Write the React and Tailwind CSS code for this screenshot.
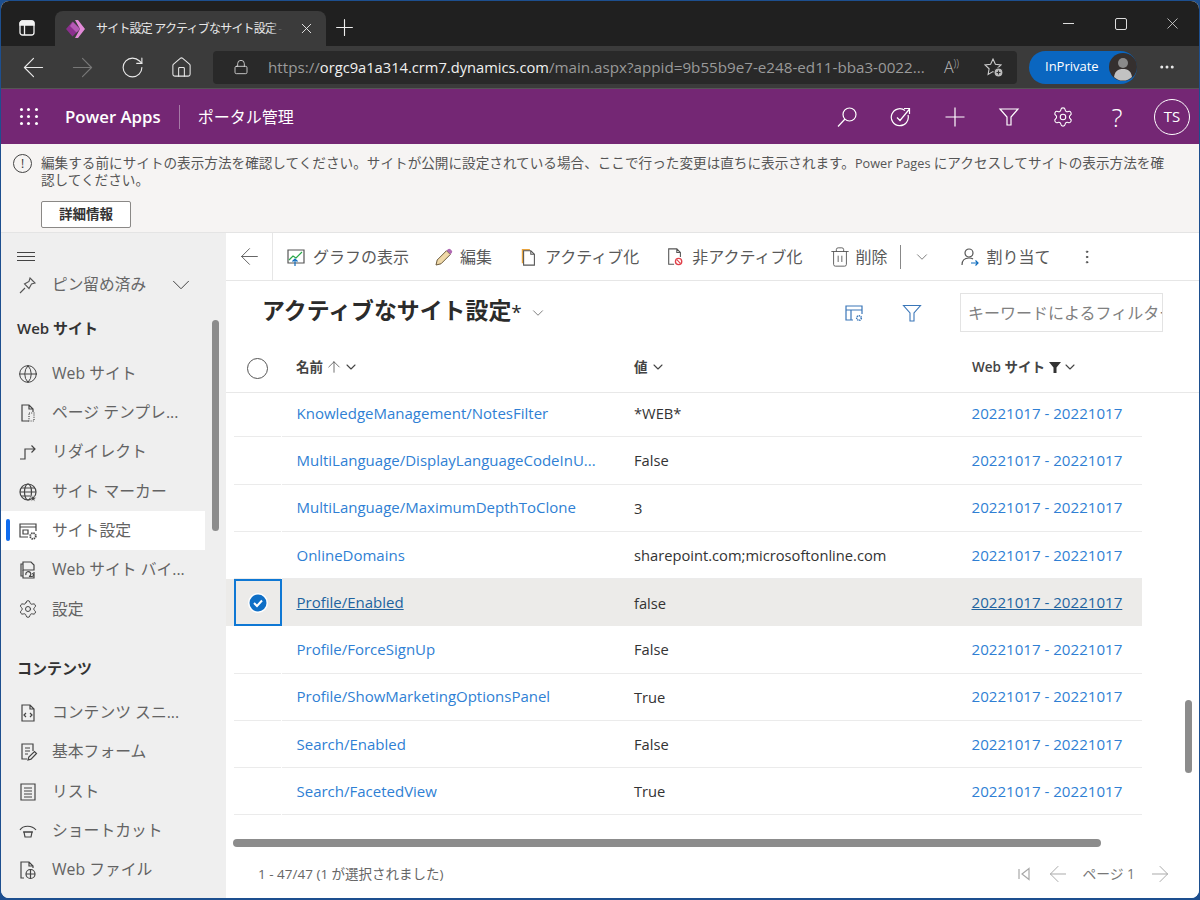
import { Globe, Settings, Plus, ChevronDown, ArrowLeft, ArrowRight, ArrowUp, MoreVertical, MoreHorizontal, X, RotateCw, Home, Lock, Trash2 } from "lucide-react";

const font = "font-['Open_Sans','Noto_Sans_CJK_JP',sans-serif]";

const rows = [
  ["KnowledgeManagement/NotesFilter", "*WEB*"],
  ["MultiLanguage/DisplayLanguageCodeInU...", "False"],
  ["MultiLanguage/MaximumDepthToClone", "3"],
  ["OnlineDomains", "sharepoint.com;microsoftonline.com"],
  ["Profile/Enabled", "false", true],
  ["Profile/ForceSignUp", "False"],
  ["Profile/ShowMarketingOptionsPanel", "True"],
  ["Search/Enabled", "False"],
  ["Search/FacetedView", "True"],
  ["Search/Filters", ""],
];

const Ico = ({ children, size = 20, className = "" }) => (
  <svg width={size} height={size} viewBox="0 0 20 20" fill="none" stroke="currentColor" strokeWidth="1.2" className={"shrink-0 " + className}>
    {children}
  </svg>
);

const siteNav = [
  ["Web サイト", <Globe size={20} strokeWidth={1.2} />],
  ["ページ テンプレ...", <Ico><path d="M11 18H4V2h7l4 4v3M11 2v4h4" /><path d="M11 10h5v8h-5z" strokeDasharray="1 1.2" /></Ico>],
  ["リダイレクト", <Ico><path d="M2 17h5V7h10M13.5 3.5 17 7l-3.5 3.5" /></Ico>],
  ["サイト マーカー", <Ico><circle cx="10" cy="10" r="8" /><ellipse cx="10" cy="10" rx="3.5" ry="8" /><path d="M2 10h16M3 6h14M3 14h9" /><path d="m15 13 1 2.2 2.3.2-1.7 1.5.5 2.3-2.1-1.2-2 1.2.5-2.3-1.7-1.5 2.3-.2z" fill="currentColor" stroke="#efefef" strokeWidth=".6" /></Ico>],
  ["サイト設定", <Ico><path d="M10 16H2V3h16v7M2 6h16" /><path d="M5 9h5v4H5z" /><circle cx="15" cy="15" r="2.8" strokeWidth="1.8" strokeDasharray="1.4 .8" /></Ico>, true],
  ["Web サイト バイ...", <Ico><path d="M5 16H3V4h2M5 2h8l3 3v5H5z" /><path d="M5 10v8h11v-6" /><path d="M8 15a2.5 2.5 0 1 1 3 1.5h3a1.5 1.5 0 0 0 0-3" /></Ico>],
  ["設定", <Settings size={20} strokeWidth={1.2} />],
];

const contentNav = [
  ["コンテンツ スニ...", <Ico><path d="M4 2h8l4 4v12H4zM12 2v4h4" /><path d="m8 10-2 2 2 2M12 10l2 2-2 2" /></Ico>],
  ["基本フォーム", <Ico><path d="M9 17H4V2h11v7M7 6h5M7 9h5M7 12h3" /><path d="m10 18 .8-3L16.5 9.5l2 2-5.5 5.7z" /></Ico>],
  ["リスト", <Ico><path d="M3 2h14v16H3zM6 6h8M6 9h8M6 12h8M6 15h8" /></Ico>],
  ["ショートカット", <Ico><path d="M2 9c3-5 12-5 16 0" /><path d="M6 11h8l-1 5H7z" /><path d="M5 11h10" /></Ico>],
  ["Web ファイル", <Ico><path d="M6 18H3V2h8l4 4v2M11 2v4h4" /><circle cx="12.5" cy="14" r="4.5" /><path d="M8 14h9M12.5 9.5v9" /></Ico>],
];

const NavItem = ({ label, icon, active }) => (
  <div className={"relative mr-[21px] flex h-[39.3px] items-center pl-[17px] text-[15.8px] " + (active ? "bg-white" : "")}>
    {active && <span className="absolute left-[5px] top-[8px] h-[22px] w-[4px] rounded-sm bg-[#0f6cf0]" />}
    <span className="flex w-[20px] justify-center text-[#444]">{icon}</span>
    <span className="ml-[14px] text-[#636363]">{label}</span>
  </div>
);

const Cmd = ({ icon, label, className = "" }) => (
  <div className={"flex items-center text-[16px] text-[#595959] " + className}>
    {icon}
    {label && <span className="ml-[7px]">{label}</span>}
  </div>
);

export default function App() {
  return (
    <div className={"h-[900px] w-[1200px] overflow-hidden bg-[#1d4f8f] p-[1px] pb-[2px] " + font}>
      <div className="flex h-full flex-col overflow-hidden rounded-lg bg-white">
        {/* tab strip */}
        <div className="flex h-[45px] items-end bg-[#202020] pl-[18px] text-white">
          <div className="mb-[10px] mr-[20px]">
            <svg width="16" height="16" viewBox="0 0 16 16" fill="none" stroke="#f3f3f3" strokeWidth="1.3">
              <rect x="1" y="1" width="14" height="14" rx="2.5" />
              <path d="M5.5 5v10" />
              <path d="M1 3.5C1 2 2 1 3.5 1h9C14 1 15 2 15 3.5V5H1z" fill="#f3f3f3" />
            </svg>
          </div>
          <div className="flex h-[35px] w-[271px] items-center rounded-t-lg bg-[#3b3b3b] pl-[11px]">
            <svg width="20" height="20" viewBox="0 0 20 20">
              <path d="M6.5 2.5 14 10l-7.5 7.5L0 10z" fill="#8b2f8d" />
              <path d="M9 1h3l7 9-7 9H9l5-9z" fill="#e28ad8" />
              <path d="m7 3 7 7-3.5 3.5L4 7z" fill="#b55ab5" />
            </svg>
            <span className="relative ml-[10px] w-[187px] overflow-hidden whitespace-nowrap text-[12px] tracking-[-0.8px] text-[#e8e8e8]">
              サイト設定 アクティブなサイト設定 - Power Apps
              <span className="absolute right-0 top-0 h-full w-[14px] bg-gradient-to-r from-transparent to-[#3b3b3b]" />
            </span>
            <X size={17} strokeWidth={1.3} className="ml-[15px] text-[#eee]" />
          </div>
          <Plus size={27} strokeWidth={1} className="mb-[5px] ml-[5px] text-[#eee]" />
          <div className="mb-[13px] ml-auto flex items-center gap-[36px] pr-[17px]">
            <span className="mr-[5px] h-px w-[11px] bg-[#ddd]" />
            <span className="h-[12px] w-[12px] rounded-[2px] border border-[#ddd]" />
            <X size={19} strokeWidth={1} className="text-[#ddd]" />
          </div>
        </div>
        {/* address bar */}
        <div className="flex h-[43px] items-center border-b border-[#555] bg-[#3b3b3b] pl-[16.5px] text-[#e8e8e8]">
          <ArrowLeft size={31} strokeWidth={0.9} />
          <ArrowRight size={31} strokeWidth={0.9} className="ml-[18px] text-[#777]" />
          <RotateCw size={25} strokeWidth={1.1} className="ml-[22px]" />
          <Home size={23} strokeWidth={1.1} className="ml-[25px]" />
          <div className="ml-[20.5px] flex h-[33px] w-[804px] items-center rounded bg-[#292929] pl-[20px]">
            <Lock size={16} strokeWidth={1.2} />
            <span className="ml-[19px] w-[659px] overflow-hidden whitespace-nowrap text-[15.2px] text-[#9a9a9a]">
              https://<span className="text-[14.7px] text-[#f0f0f0]">orgc9a1a314.crm7.dynamics.com</span>/main.aspx?appid=9b55b9e7-e248-ed11-bba3-0022...
            </span>
            <span className="ml-[17px] w-[22px] text-[16px] font-light text-[#bbb]">A<span className="align-super text-[10px]">))</span></span>
            <svg width="20" height="20" viewBox="0 0 20 20" fill="none" stroke="#ccc" strokeWidth="1.1" className="ml-[17px]">
              <path d="m10 2 2.4 5.2 5.6.7-4.1 3.9 1 5.6L10 14.6l-4.9 2.800 1-5.600L2 7.900l5.600-.7z" />
              <circle cx="15.5" cy="15.5" r="4.5" fill="#bbb" stroke="#292929" />
              <path d="M15.5 13.5v4M13.5 15.5h4" stroke="#333" />
            </svg>
          </div>
          <div className="ml-[12px] flex h-[33px] w-[108px] items-center rounded-full bg-[#0a66c0] pl-[16px] text-[13px] text-white">
            InPrivate
            <svg width="28" height="28" viewBox="0 0 28 28" className="ml-[10px]">
              <circle cx="14" cy="14" r="14" fill="#35302f" />
              <circle cx="14" cy="10" r="5" fill="#8a8a8a" />
              <path d="M5 24c1-7 5-8 9-8s8 1 9 8a13 13 0 0 1-18 0z" fill="#c2c2c2" />
            </svg>
          </div>
          <MoreHorizontal size={18} strokeWidth={2} className="ml-[21px]" />
        </div>
        {/* app header */}
        <div className="flex h-[55px] items-center bg-[#742774] pl-[19px] text-white">
          <div className="grid w-[18px] grid-cols-3 gap-[4px]">
            {[0, 1, 2, 3, 4, 5, 6, 7, 8].map((i) => (
              <span key={i} className="h-[3px] w-[3px] rounded-full bg-white" />
            ))}
          </div>
          <span className="ml-[27px] text-[16.8px] font-semibold">Power Apps</span>
          <span className="ml-[18px] h-[24px] w-px bg-[#a77aa7]" />
          <span className="ml-[18px] text-[16px]">ポータル管理</span>
          <div className="ml-auto flex items-center gap-[32px] pr-[9px]">
            <svg width="22" height="22" viewBox="0 0 22 22" fill="none" stroke="currentColor" strokeWidth="1.2">
              <circle cx="13.5" cy="8.5" r="6.5" />
              <path d="M9 13 2 20.5" />
            </svg>
            <svg width="22" height="22" viewBox="0 0 22 22" fill="none" stroke="currentColor" strokeWidth="1.2">
              <path d="M15 4.5A8.5 8.5 0 1 0 18 9M7 11.5l3 3L19.5 3M14 2.500h5.500V8" />
            </svg>
            <svg width="22" height="22" viewBox="0 0 22 22" fill="none" stroke="currentColor" strokeWidth="1.2">
              <path d="M11 1.5v19M1.5 11h19" />
            </svg>
            <svg width="22" height="22" viewBox="0 0 22 22" fill="none" stroke="currentColor" strokeWidth="1.2">
              <path d="M2 3h18l-7 8v8H9v-8z" />
            </svg>
            <Settings size={22} strokeWidth={1.2} />
            <span className="flex w-[22px] justify-center text-[26px] font-light leading-none">?</span>
            <span className="-ml-[6px] flex h-[36px] w-[36px] items-center justify-center rounded-full border border-white text-[15px]">TS</span>
          </div>
        </div>
        {/* notice */}
        <div className="h-[89px] border-b border-[#e4e4e4] bg-[#f6f4f3] pl-[12px] pt-[10px]">
          <div className="flex">
            <span className="flex h-[19px] w-[19px] shrink-0 items-center justify-center rounded-full border border-[#444] text-[12px] text-[#333]">!</span>
            <div className="ml-[9px] text-[13.62px] text-[#555]">
              <p className="h-[18px] whitespace-nowrap leading-[18px]">編集する前にサイトの表示方法を確認してください。サイトが公開に設定されている場合、ここで行った変更は直ちに表示されます。<span className="text-[12.7px]">Power Pages </span>にアクセスしてサイトの表示方法を確</p>
              <p className="h-[18px] leading-[16px]">認してください。</p>
            </div>
          </div>
          <button className="ml-[28px] mt-[11px] h-[27px] w-[90px] rounded-[2px] border border-[#8a8886] bg-white text-[13.5px] font-bold text-[#333]">詳細情報</button>
        </div>

        <div className="flex min-h-0 flex-1">
          {/* sidebar */}
          <div className="relative w-[225px] shrink-0 overflow-hidden bg-[#efefef]">
            <div className="mt-[3px] flex h-[40px] items-center pl-[16px]">
              <div className="flex w-[18px] flex-col gap-[3px]">
                <span className="h-px bg-[#444]" />
                <span className="h-px bg-[#444]" />
                <span className="h-px bg-[#444]" />
              </div>
            </div>
            <div className="flex h-[18px] items-center pl-[17px] text-[15.7px] text-[#666]">
              <svg width="20" height="20" viewBox="0 0 20 20" fill="none" stroke="#555" strokeWidth="1.1" className="shrink-0">
                <path d="m12 3 5 5-3.5 1-2.5 4.5L6.500 9l4.500-2.500zM7 13l-5 5" />
              </svg>
              <span className="ml-[14px] whitespace-nowrap">ピン留め済み</span>
              <ChevronDown size={30} strokeWidth={0.8} className="ml-[20px] shrink-0 text-[#444]" />
            </div>
            <div className="ml-[16px] mt-[14px] flex h-[40px] items-center text-[15px] font-semibold text-[#333]">Web サイト</div>
            <div className="mt-[6px]">
              {siteNav.map(([label, icon, active]) => (
                <NavItem key={label} label={label} icon={icon} active={active} />
              ))}
            </div>
            <div className="ml-[16px] mt-[19px] flex h-[40px] items-center text-[15px] font-semibold text-[#333]">コンテンツ</div>
            <div className="mt-[5.2px]">
              {contentNav.map(([label, icon]) => (
                <NavItem key={label} label={label} icon={icon} />
              ))}
            </div>
            <span className="absolute left-[211px] top-[87px] h-[211px] w-[7px] rounded-full bg-[#8c8c8c]" />
          </div>

          {/* main */}
          <div className="relative flex min-w-0 flex-1 flex-col bg-white">
            <div className="flex h-[48px] shrink-0 items-center border-b border-[#e6e6e6]">
              <div className="flex h-full w-[47px] items-center justify-center border-r border-[#e6e6e6] text-[#555]">
                <ArrowLeft size={27} strokeWidth={0.8} />
              </div>
              <Cmd className="ml-[13px]" label="グラフの表示" icon={
                <Ico><path d="M2 3h16v13H2z" stroke="#555" /><path d="m3 13 4-4 3 2 6-6" stroke="#2aa84a" /><path d="M9 19v-7M6.5 14.5 9 12l2.5 2.5" stroke="#0f6cbd" /></Ico>
              } />
              <Cmd className="ml-[26px]" label="編集" icon={
                <svg width="18" height="18" viewBox="0 0 18 18" className="shrink-0">
                  <path d="M1 17l1.2-5L11.500 2.700l3.800 3.800L6 15.800z" fill="#f0d9a8" stroke="#6b5a3c" strokeWidth="1" />
                  <path d="M13 1.300a1.700 1.700 0 0 1 2.400 0l1.300 1.300a1.700 1.700 0 0 1 0 2.400l-1.300 1.300-3.800-3.800z" fill="#b06ab3" />
                </svg>
              } />
              <Cmd className="ml-[28px]" label="アクティブ化" icon={
                <Ico size={18}>
                  <path d="M2 1h9v2H4v14H2z" fill="#e8a33d" stroke="none" />
                  <path d="M4 3h8l4 4v12H4zM12 3v4h4" fill="#fff" stroke="#555" />
                </Ico>
              } />
              <Cmd className="ml-[27px] gap-px" label="非アクティブ化" icon={
                <Ico size={18}><path d="M9 18H3V1h9l4 4v5M12 1v4h4" stroke="#555" /><circle cx="14" cy="15" r="3.5" stroke="#e0404a" strokeWidth="1.5" /><path d="m12 13 4 4" stroke="#e0404a" /></Ico>
              } />
              <Cmd className="ml-[28px]" label="削除" icon={<Trash2 size={22} strokeWidth={1} className="-mx-[2px]" />} />
              <span className="ml-[12px] h-[24px] w-px bg-[#888]" />
              <ChevronDown size={18} strokeWidth={1} className="ml-[12px] text-[#555]" />
              <Cmd className="ml-[29px]" label="割り当て" icon={
                <Ico><circle cx="9" cy="6" r="4" stroke="#555" /><path d="M2 18c0-5 3-7 7-7 1.5 0 3 .3 4 1" stroke="#555" /><path d="M11 16h7M15.500 13.500 18 16l-2.500 2.500" stroke="#0f6cbd" /></Ico>
              } />
              <MoreVertical size={18} strokeWidth={1.3} className="ml-[27px] text-[#444]" />
            </div>

            <div className="flex h-[63px] shrink-0 items-center pl-[36px]">
              <h1 className="whitespace-nowrap pb-[3px] text-[22.9px] font-bold text-[#2b2b2b]">アクティブなサイト設定<span className="text-[19px] font-normal">*</span></h1>
              <ChevronDown size={18} strokeWidth={1} className="ml-[7px] text-[#555]" />
              <div className="ml-auto flex items-center pr-[36px]">
                <svg width="20" height="20" viewBox="0 0 20 20" fill="none" stroke="#3a76b8" strokeWidth="1.2">
                  <path d="M9 17H2V3h16v8M2 7h16M7 7v10" />
                  <circle cx="15" cy="15" r="2.3" strokeWidth="1.6" strokeDasharray="1.2 .7" />
                </svg>
                <svg width="20" height="20" viewBox="0 0 20 20" fill="none" stroke="#3a76b8" strokeWidth="1.1" className="ml-[38px]">
                  <path d="M1.5 2.5h17L12 10v8H8v-8z" />
                </svg>
                <div className="ml-[38px] flex h-[39px] w-[203px] items-center overflow-hidden whitespace-nowrap border border-[#e3e3e3] pl-[7px] text-[16px] text-[#808080]">キーワードによるフィルター</div>
              </div>
            </div>

            <div className="ml-[8px] grid h-[48px] w-[908px] shrink-0 grid-cols-[48px_338px_337px_185px] items-center pb-[2px] text-[13.5px] font-semibold text-[#444]">
              <span className="ml-[13px] mt-[2px] h-[21px] w-[21px] rounded-full border border-[#555]" />
              <span className="flex items-center pl-[14px]">名前<ArrowUp size={18} strokeWidth={1} className="ml-[2px]" /><ChevronDown size={16} strokeWidth={1.6} /></span>
              <span className="flex items-center pl-[14px]">値<ChevronDown size={16} strokeWidth={1.6} className="ml-[2px]" /></span>
              <span className="flex items-center pl-[15px]">Web サイト
                <svg width="14" height="14" viewBox="0 0 14 14" className="ml-[3px]"><path d="M1 2h12L8.5 7.5V13h-3V7.5z" fill="#333" /></svg>
                <ChevronDown size={16} strokeWidth={1.6} />
              </span>
            </div>

            <div className="h-[441px] shrink-0 overflow-hidden border-t border-[#e8e8e8]">
              <div className="-mt-[2.9px]">
                {rows.map(([name, value, selected]) => (
                  <div key={name} className={"grid h-[47.25px] w-[916px] grid-cols-[56px_338px_337px_185px] text-[15px] " + (selected ? "bg-[#ecebe9]" : "")}>
                    <div className={"ml-[8px] flex items-center justify-center " + (selected ? "border-2 border-[#0f78d4]" : "mr-px border-b border-[#ebebeb]")}>
                      {selected && (
                        <svg width="20" height="20" viewBox="0 0 20 20">
                          <circle cx="10" cy="10" r="10" fill="#fff" />
                          <circle cx="10" cy="10" r="8.5" fill="#0f6fc6" />
                          <path d="m6 10 3 3 5-5.5" fill="none" stroke="#fff" strokeWidth="2" />
                        </svg>
                      )}
                    </div>
                    <div className={"flex items-center pl-[14.5px] " + (selected ? "" : "border-b border-[#ebebeb]")}>
                      <span className={selected ? "text-[#21639f] underline" : "text-[#2f7fd4]"}>{name}</span>
                    </div>
                    <div className={"flex items-center pl-[14px] text-[14.7px] text-[#333] " + (selected ? "" : "border-b border-[#ebebeb]")}>{value}</div>
                    <div className={"flex items-center pl-[14.5px] text-[15.1px] " + (selected ? "" : "border-b border-[#ebebeb]")}>
                      <span className={selected ? "text-[#21639f] underline" : "text-[#2f7fd4]"}>20221017 - 20221017</span>
                    </div>
                  </div>
                ))}
              </div>
            </div>

            <div className="ml-[7px] mt-[6px] h-[8px] w-[868px] shrink-0 rounded-full bg-[#8c8c8c]" />

            <div className="flex flex-1 items-center pl-[32px] pr-[26px] pt-[3px] text-[13.5px] text-[#666]">
              1 - 47/47 (1 が選択されました)
              <div className="ml-auto flex items-center text-[#a8a8a8]">
                <svg width="16" height="16" viewBox="0 0 16 16" fill="none" stroke="currentColor" strokeWidth="1.2">
                  <path d="M3 3v10M13 2.5v11L6 8z" />
                </svg>
                <ArrowLeft size={26} strokeWidth={0.9} className="ml-[13px]" />
                <span className="ml-[11px] text-[13.8px] text-[#777]">ページ 1</span>
                <ArrowRight size={26} strokeWidth={0.9} className="ml-[12px]" />
              </div>
            </div>

            {/* grid scrollbar */}
            <span className="absolute left-[959px] top-[467px] h-[73px] w-[7px] rounded-full bg-[#8c8c8c]" />
          </div>
        </div>
      </div>
    </div>
  );
}
